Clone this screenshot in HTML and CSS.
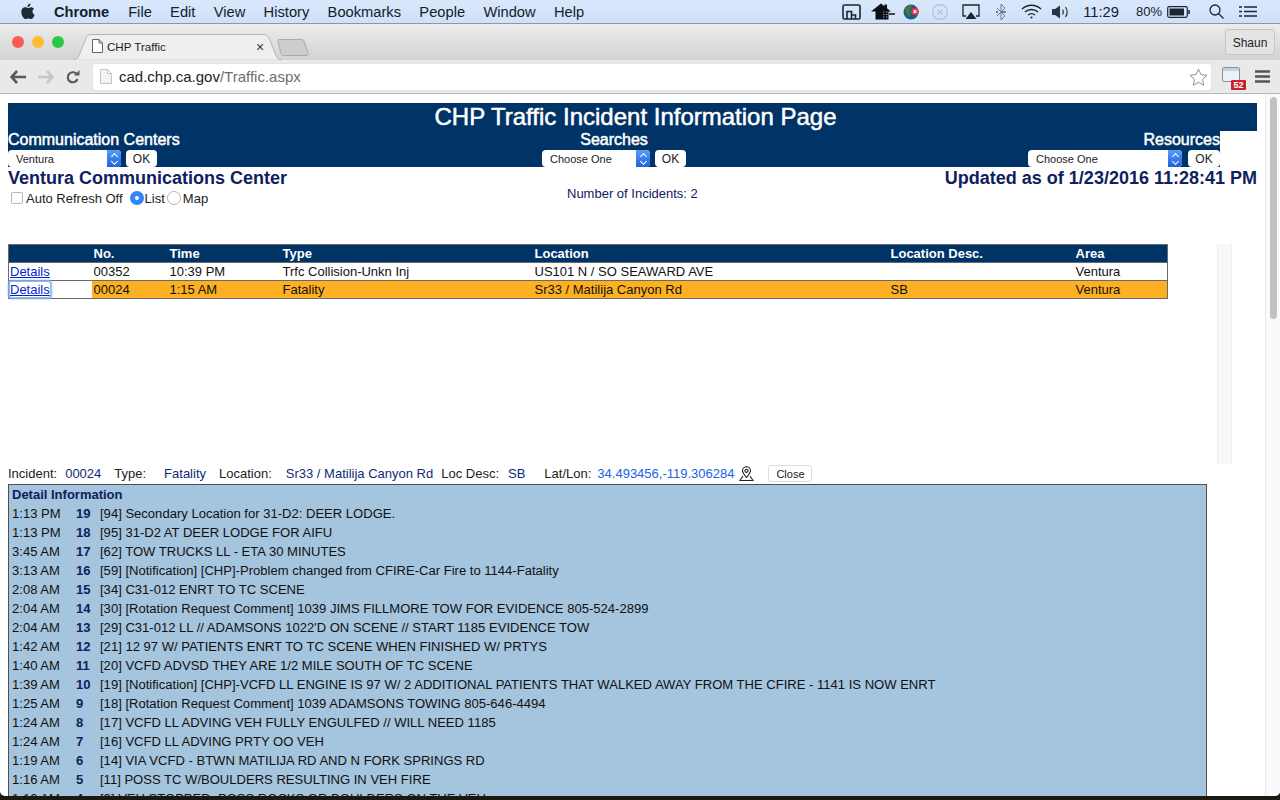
FILE: index.html
```html
<!DOCTYPE html>
<html lang="en">
  <head>
    <meta charset="UTF-8" />
    <title>CHP Traffic</title>
    <link rel="stylesheet" href="styles.css">
  </head>
  <body>
    <div class="menubar">
      <svg class="apple" width="14" height="17" viewBox="0 0 14 17">
        <path d="M9.600 0.400c0.100 1.900-1.600 3.500-3.200 3.400-0.200-1.700 1.500-3.400 3.200-3.400zM10.100 4.200c1 0 2.200 0.500 3 1.600-2.400 1.500-2 4.800 0.600 5.900-0.700 1.900-2.200 4.400-3.700 4.400-1 0-1.500-0.600-2.700-0.600s-1.800 0.600-2.700 0.600c-1.800 0-4.300-3.900-4.300-7.200 0-3 1.900-4.600 3.800-4.600 1.200 0 2.200 0.700 3 0.700 0.700 0 1.800-0.800 3-0.800z" fill="#1d2b36" />
      </svg>
      <b class="menu-app">Chrome</b>
      <span class="menu-item">File</span>
      <span class="menu-item">Edit</span>
      <span class="menu-item">View</span>
      <span class="menu-item">History</span>
      <span class="menu-item">Bookmarks</span>
      <span class="menu-item">People</span>
      <span class="menu-item">Window</span>
      <span class="menu-item">Help</span>
      <div class="menu-status">
        <svg class="st-screen" width="19" height="17" viewBox="0 0 19 17" fill="none" stroke="#1b2630" stroke-width="1.600">
          <rect x="1" y="2" width="17" height="14" rx="1.500" />
          <path d="M5 16v-7.500h4.500v7.500M9.500 12h4v4" />
        </svg>
        <svg class="st-home" width="24" height="17" viewBox="0 0 24 17">
          <path d="M0 8.500l10-8 3.500 2.800v-1.800h2.500v3.800l4 3.200h-2.500v8h-13v-8z" fill="#0b0f14" />
          <path d="M18 11h6" stroke="#0b0f14" stroke-width="1.500" />
          <path d="M12 9h1.500M15 9h1.500M12 11.500h1.500M15 11.500h1.500M12 14h1.500M15 14h1.500" stroke="#8a97a6" stroke-width="1" />
        </svg>
        <svg class="st-globe" width="16" height="16" viewBox="0 0 16 16">
          <circle cx="8" cy="8" r="7.500" fill="#1f5a86" />
          <path d="M2 4.500c2-3 5-4 7-3 0 2-2 3-2 5s1 4 0 6c-2 0-5-3-5-8z" fill="#3d7a3c" />
          <circle cx="12" cy="7.500" r="3.800" fill="#d8394a" />
          <path d="M10.600 6.100l2.800 2.800M13.400 6.100l-2.800 2.800" stroke="#fff" stroke-width="1.200" />
        </svg>
        <svg class="st-skype" width="16" height="16" viewBox="0 0 16 16" fill="none" stroke="#b8c4d4" stroke-width="1.300">
          <rect x="1" y="1" width="14" height="14" rx="5" />
          <path d="M5.500 5.500l5 5M10.500 5.500l-5 5" />
        </svg>
        <svg class="st-airplay" width="18" height="16" viewBox="0 0 18 16">
          <path d="M4 12H1V1h16v11h-3" fill="none" stroke="#1b2630" stroke-width="1.300" />
          <path d="M9 8l5.500 7h-11z" fill="#1b2630" />
        </svg>
        <svg class="st-bt" width="10" height="18" viewBox="0 0 10 18" fill="none" stroke="#6d7a88" stroke-width="1">
          <path d="M1 5l8 8-4 4V1l4 4-8 8" />
          <circle cx="1" cy="9" r="0.700" fill="#1b2630" />
          <circle cx="9" cy="9" r="0.700" fill="#1b2630" />
          <circle cx="7" cy="9" r="0.700" fill="#1b2630" />
        </svg>
        <svg class="st-wifi" width="21" height="15" viewBox="0 0 21 15" fill="none" stroke="#1b2630" stroke-width="1.400">
          <path d="M1 5c5.500-5 13.500-5 19 0M4 8c3.800-3.300 9.200-3.300 13 0M7 11c2-1.600 5-1.600 7 0" />
          <circle cx="10.500" cy="13.500" r="1" fill="#1b2630" stroke="none" />
        </svg>
        <svg class="st-vol" width="17" height="14" viewBox="0 0 17 14">
          <path d="M0 4h3l5-3.500v13L3 10H0z" fill="#2a3540" />
          <path d="M10.500 4.500c1 1.500 1 3.500 0 5M13.500 2c2 3 2 7 0 10" fill="none" stroke="#2a3540" stroke-width="1.200" />
        </svg>
        <span class="st-clock">11:29</span>
        <span class="st-pct">80%</span>
        <svg class="st-batt" width="23" height="12" viewBox="0 0 23 12">
          <rect x="0.700" y="0.700" width="19.600" height="10.600" rx="1.500" fill="none" stroke="#1b2630" stroke-width="1.200" />
          <rect x="2.500" y="2.500" width="14.500" height="7" fill="#1b2630" />
          <rect x="21.300" y="4" width="1.500" height="4" fill="#1b2630" />
        </svg>
        <svg class="st-search" width="15" height="15" viewBox="0 0 15 15" fill="none" stroke="#1b2630" stroke-width="1.300">
          <circle cx="6" cy="6" r="5" />
          <path d="M9.500 9.500l5 5" />
        </svg>
        <svg class="st-list" width="18" height="11" viewBox="0 0 18 11" fill="none" stroke="#1b2630" stroke-width="1.500">
          <path d="M0 1h3M5 1h13M0 5.500h3M5 5.500h13M0 10h3M5 10h13" />
        </svg>
      </div>
    </div>

    <div class="window">
      <div class="tabstrip">
        <div class="lights">
          <i class="light red"></i>
          <i class="light yellow"></i>
          <i class="light green"></i>
        </div>
        <div class="tab">
          <svg class="tab-shape" width="209" height="26" viewBox="0 0 209 26">
            <path d="M0 25.500c3 0 5-1 6-4L13 4c1-2.500 2.500-3.500 5-3.500h173c2.500 0 4 1 5 3.500l7 17.500c1 3 3 4 6 4" fill="#efefef" stroke="#b4b4b4" />
          </svg>
          <svg class="page-icon" width="11" height="14" viewBox="0 0 11 14" fill="#fff" stroke="#666">
            <path d="M0.500 0.500h6.500l3.500 3.500v9.500h-10zM7 0.500v3.500h3.500" />
          </svg>
          <span class="tab-title">CHP Traffic</span>
          <span class="tab-close">×</span>
        </div>
        <svg class="new-tab" width="32" height="17" viewBox="0 0 33 18" preserveAspectRatio="none">
          <path d="M1 1.500c0-0.600 0.400-1 1-1h23c1.500 0 2.500 0.800 3 2l4 12c0.400 1.500-0.500 3-2 3H7c-1.500 0-2.500-0.800-3-2z" fill="#cdcdcd" stroke="#a8a8a8" />
        </svg>
        <div class="profile">Shaun</div>
      </div>
      <div class="toolbar">
        <svg class="nav-icon" width="16" height="14" viewBox="0 0 16 14">
          <path d="M7 1L1.500 7 7 13M2 7h14" fill="none" stroke="#5a5a5a" stroke-width="2.600" />
        </svg>
        <svg class="nav-icon" width="16" height="14" viewBox="0 0 16 14">
          <path d="M9 1l5.500 6L9 13M14 7H0" fill="none" stroke="#c6c6c6" stroke-width="2.600" />
        </svg>
        <svg class="nav-icon" width="14" height="14" viewBox="0 0 14 14">
          <path d="M11.500 9a5 5 0 1 1-0.500-4.500" fill="none" stroke="#5a5a5a" stroke-width="2.200" />
          <path d="M8 5.500h5.500V0z" fill="#5a5a5a" />
        </svg>
        <div class="omnibox">
          <svg class="page-icon-light" width="12" height="15" viewBox="0 0 12 15" fill="#f4f4f4" stroke="#c4c4c4">
            <path d="M0.500 0.500h7l4 4v10h-11zM7.500 0.500v4h4" />
          </svg>
          <span class="url">cad.chp.ca.gov<span class="url-path">/Traffic.aspx</span></span>
          <svg class="star" width="19" height="18" viewBox="0 0 19 18">
            <path d="M9.500 1l2.500 5.600 6 0.700-4.500 4 1.300 6-5.300-3-5.300 3 1.300-6-4.500-4 6-0.700z" fill="#fff" stroke="#8f8f8f" />
          </svg>
        </div>
        <div class="ext-icon">
          <svg width="18" height="15" viewBox="0 0 18 15">
            <rect x="0.500" y="0.500" width="17" height="14" rx="1.500" fill="#eef2f6" stroke="#8b8f94" />
            <rect x="1" y="1" width="16" height="3" fill="#bcd3e8" />
          </svg>
          <span class="ext-badge">52</span>
        </div>
        <svg class="hamburger" width="15" height="13" viewBox="0 0 15 13">
          <path d="M0 1.500h15M0 6.500h15M0 11.500h15" stroke="#555" stroke-width="2.300" />
        </svg>
      </div>

      <div class="viewport">
        <div class="page">
          <h1 class="page-title">CHP Traffic Incident Information Page</h1>
          <div class="controls">
            <div class="control control-left">
              <div class="control-label">Communication Centers</div>
              <div class="control-row">
                <span class="select select-left">Ventura<i class="select-arrow"></i></span>
                <span class="ok-btn">OK</span>
              </div>
            </div>
            <div class="control control-center">
              <div class="control-label">Searches</div>
              <div class="control-row">
                <span class="select select-mid">Choose One<i class="select-arrow"></i></span>
                <span class="ok-btn">OK</span>
              </div>
            </div>
            <div class="control control-right">
              <div class="control-label">Resources</div>
              <div class="control-row">
                <span class="select select-right">Choose One<i class="select-arrow"></i></span>
                <span class="ok-btn">OK</span>
              </div>
            </div>
          </div>

          <div class="status">
            <div class="status-left">
              <h2 class="center-name">Ventura Communications Center</h2>
              <div class="view-opts">
                <i class="checkbox"></i><span class="opt-refresh">Auto Refresh Off</span>
                <i class="radio radio-on"></i><span class="opt-list">List</span>
                <i class="radio"></i><span class="opt-map">Map</span>
              </div>
            </div>
            <div class="incident-count">Number of Incidents: 2</div>
            <h2 class="updated">Updated as of 1/23/2016 11:28:41 PM</h2>
          </div>

          <div class="incident-area">
            <table class="incidents">
              <colgroup>
                <col class="col-link" />
                <col class="col-no" />
                <col class="col-time" />
                <col class="col-type" />
                <col class="col-loc" />
                <col class="col-desc" />
                <col />
              </colgroup>
              <thead>
                <tr>
                  <th></th>
                  <th>No.</th>
                  <th>Time</th>
                  <th>Type</th>
                  <th>Location</th>
                  <th>Location Desc.</th>
                  <th>Area</th>
                </tr>
              </thead>
              <tbody>
                <tr>
                  <td class="link-cell"><a href="#">Details</a></td>
                  <td>00352</td>
                  <td>10:39 PM</td>
                  <td>Trfc Collision-Unkn Inj</td>
                  <td>US101 N / SO SEAWARD AVE</td>
                  <td></td>
                  <td>Ventura</td>
                </tr>
                <tr class="selected">
                  <td class="link-cell"><a href="#" class="focused">Details</a></td>
                  <td>00024</td>
                  <td>1:15 AM</td>
                  <td>Fatality</td>
                  <td>Sr33 / Matilija Canyon Rd</td>
                  <td>SB</td>
                  <td>Ventura</td>
                </tr>
              </tbody>
            </table>
            <div class="inner-track"></div>
          </div>

          <div class="incident-line">
            <span>Incident:</span><span class="val val-no">00024</span>
            <span class="lbl-type">Type:</span><span class="val val-type">Fatality</span>
            <span class="lbl-loc">Location:</span><span class="val val-loc">Sr33 / Matilija Canyon Rd</span>
            <span class="lbl-desc">Loc Desc:</span><span class="val val-desc">SB</span>
            <span class="lbl-lat">Lat/Lon:</span><a class="latlon" href="#">34.493456,-119.306284</a>
            <svg class="pin" width="15" height="15" viewBox="0 0 15 15" fill="none" stroke="#222" stroke-width="1.100">
              <path d="M7.500 11.500C5 8.500 3.500 6.800 3.500 4.800a4 4 0 0 1 8 0c0 2-1.500 3.700-4 6.700z" />
              <circle cx="7.500" cy="4.800" r="1.600" />
              <path d="M4 10l-3 4.500h13L11 10" />
            </svg>
            <span class="close-btn">Close</span>
          </div>

          <div class="detail">
            <div class="detail-title">Detail Information</div>
            <div class="detail-row"><span>1:13 PM</span><b>19</b><span>[94] Secondary Location for 31-D2: DEER LODGE.</span></div>
            <div class="detail-row"><span>1:13 PM</span><b>18</b><span>[95] 31-D2 AT DEER LODGE FOR AIFU</span></div>
            <div class="detail-row"><span>3:45 AM</span><b>17</b><span>[62] TOW TRUCKS LL - ETA 30 MINUTES</span></div>
            <div class="detail-row"><span>3:13 AM</span><b>16</b><span>[59] [Notification] [CHP]-Problem changed from CFIRE-Car Fire to 1144-Fatality</span></div>
            <div class="detail-row"><span>2:08 AM</span><b>15</b><span>[34] C31-012 ENRT TO TC SCENE</span></div>
            <div class="detail-row"><span>2:04 AM</span><b>14</b><span>[30] [Rotation Request Comment] 1039 JIMS FILLMORE TOW FOR EVIDENCE 805-524-2899</span></div>
            <div class="detail-row"><span>2:04 AM</span><b>13</b><span>[29] C31-012 LL // ADAMSONS 1022'D ON SCENE // START 1185 EVIDENCE TOW</span></div>
            <div class="detail-row"><span>1:42 AM</span><b>12</b><span>[21] 12 97 W/ PATIENTS ENRT TO TC SCENE WHEN FINISHED W/ PRTYS</span></div>
            <div class="detail-row"><span>1:40 AM</span><b>11</b><span>[20] VCFD ADVSD THEY ARE 1/2 MILE SOUTH OF TC SCENE</span></div>
            <div class="detail-row"><span>1:39 AM</span><b>10</b><span>[19] [Notification] [CHP]-VCFD LL ENGINE IS 97 W/ 2 ADDITIONAL PATIENTS THAT WALKED AWAY FROM THE CFIRE - 1141 IS NOW ENRT</span></div>
            <div class="detail-row"><span>1:25 AM</span><b>9</b><span>[18] [Rotation Request Comment] 1039 ADAMSONS TOWING 805-646-4494</span></div>
            <div class="detail-row"><span>1:24 AM</span><b>8</b><span>[17] VCFD LL ADVING VEH FULLY ENGULFED // WILL NEED 1185</span></div>
            <div class="detail-row"><span>1:24 AM</span><b>7</b><span>[16] VCFD LL ADVING PRTY OO VEH</span></div>
            <div class="detail-row"><span>1:19 AM</span><b>6</b><span>[14] VIA VCFD - BTWN MATILIJA RD AND N FORK SPRINGS RD</span></div>
            <div class="detail-row"><span>1:16 AM</span><b>5</b><span>[11] POSS TC W/BOULDERS RESULTING IN VEH FIRE</span></div>
            <div class="detail-row"><span>1:10 AM</span><b>4</b><span>[9] VEH STOPPED, POSS ROCKS OR BOULDERS ON THE VEH</span></div>
          </div>
        </div>
        <div class="scrollbar"><div class="scroll-thumb"></div></div>
      </div>
    </div>
  </body>
</html>
```

FILE: styles.css
```css
* {
  box-sizing: border-box;
}
html,
body {
  margin: 0;
  height: 800px;
  overflow: hidden;
}
body {
  display: flex;
  flex-direction: column;
  background: #1b1a12;
  font-family: "Liberation Sans", Arial, sans-serif;
  color: #111;
}

/* mac menu bar */
.menubar {
  display: flex;
  align-items: center;
  height: 23px;
  padding-left: 21px;
  background: linear-gradient(#d9e8fc, #cfe0f8);
  font-size: 14.700px;
  color: #16202a;
}
.apple {
  margin-right: 19px;
}
.menu-app {
  margin-right: 19px;
  font-size: 14.600px;
  font-weight: 700;
}
.menu-item {
  margin-right: 18.300px;
}
.menu-status {
  display: flex;
  align-items: center;
  margin-left: auto;
  padding-right: 23px;
  font-size: 13px;
}
.menu-status svg,
.menu-status span {
  flex: none;
}
.st-screen { margin-right: 10px; }
.st-home { margin-right: 8px; }
.st-globe { margin-right: 13px; }
.st-skype { margin-right: 14px; }
.st-airplay { margin-right: 16px; }
.st-bt { margin-right: 15px; }
.st-wifi { margin-right: 10px; }
.st-vol { margin-right: 14px; }
.st-clock { margin-right: 17px; font-size: 14.700px; }
.st-pct { margin-right: 5px; }
.st-batt { margin-right: 19px; }
.st-search { margin-right: 15px; }

/* browser frame */
.window {
  display: flex;
  flex-direction: column;
  height: 773px;
  border-radius: 0 0 5px 5px;
  overflow: hidden;
  background: #fff;
}
.tabstrip {
  display: flex;
  align-items: flex-end;
  flex: none;
  height: 37px;
  border-top: 1px solid #8a97a8;
  background: linear-gradient(#ececec, #d3d3d3);
}
.lights {
  display: flex;
  gap: 8px;
  align-self: flex-start;
  margin: 12px 0 0 12px;
}
.light {
  width: 12px;
  height: 12px;
  border-radius: 50%;
}
.red { background: #fb5b55; }
.yellow { background: #fdbb33; }
.green { background: #2ac840; }
.tab {
  position: relative;
  display: flex;
  align-items: center;
  flex: none;
  width: 209px;
  height: 26px;
  margin-left: 9px;
  padding: 0 0 2px 19px;
  font-size: 11.600px;
  color: #222;
}
.tab-shape {
  position: absolute;
  top: 0;
  left: 0;
}
.page-icon {
  position: relative;
  margin-right: 4px;
}
.tab-title {
  position: relative;
}
.tab-close {
  position: absolute;
  left: 183px;
  top: 6px;
  font-size: 14px;
  line-height: 15px;
  color: #333;
}
.new-tab {
  margin: 0 0 4px -5px;
}
.profile {
  align-self: flex-start;
  width: 50px;
  height: 26px;
  margin: 5px 5px 0 auto;
  border: 1px solid #c6c6c6;
  border-radius: 3px;
  background: #e4e4e4;
  font-size: 12px;
  line-height: 27px;
  text-align: center;
  color: #222;
}
.toolbar {
  display: flex;
  align-items: center;
  flex: none;
  height: 34px;
  padding-left: 10px;
  border-bottom: 1px solid #b8b8b8;
  background: #e9e9e9;
}
.nav-icon {
  margin-right: 12px;
}
.omnibox {
  display: flex;
  align-items: center;
  width: 1118px;
  height: 26px;
  margin-left: 1px;
  padding: 0 3px 0 7px;
  border-radius: 2px;
  background: #fff;
  box-shadow: 0 0 1px #aaa;
  font-size: 15px;
}
.page-icon-light {
  margin-right: 7px;
}
.url {
  color: #222;
}
.url-path {
  color: #6e6e6e;
}
.star {
  margin-left: auto;
}
.ext-icon {
  position: relative;
  width: 24px;
  height: 22px;
  margin-left: 11px;
  padding-top: 1px;
}
.ext-icon svg {
  display: block;
}
.ext-badge {
  position: absolute;
  right: 0;
  bottom: -2px;
  width: 15px;
  height: 10px;
  border-radius: 1px;
  background: #c8202c;
  font-size: 9px;
  font-weight: 700;
  line-height: 10px;
  text-align: center;
  color: #fff;
}
.hamburger {
  margin-left: 9px;
}

/* the traffic page */
.viewport {
  display: flex;
  flex: 1;
  min-height: 0;
}
.page {
  flex: 1;
  min-width: 0;
  padding: 9px 8px 0;
  overflow: hidden;
}
.scrollbar {
  flex: none;
  width: 15px;
  padding: 3px 3px 0 4px;
  border-left: 1px solid #e8e8e8;
  background: #fafafa;
}
.scroll-thumb {
  height: 222px;
  border-radius: 4px;
  background: #c2c2c2;
}
.page-title {
  margin: 0;
  width: 1249px;
  height: 28px;
  padding-left: 6px;
  background: #003366;
  font-size: 24px;
  font-weight: 400;
  line-height: 28px;
  text-align: center;
  color: #fff;
  -webkit-text-stroke: 0.500px #fff;
}
.controls {
  display: grid;
  grid-template-columns: 1fr 1fr 1fr;
  width: 1212px;
  height: 36px;
  background: #003366;
}
.control-label {
  height: 19px;
  font-size: 16px;
  line-height: 18px;
  color: #fff;
  -webkit-text-stroke: 0.500px #fff;
}
.control-row {
  display: flex;
  gap: 5px;
  height: 17px;
}
.control-center {
  text-align: center;
}
.control-center .control-row {
  justify-content: center;
}
.control-right {
  text-align: right;
}
.control-right .control-row {
  justify-content: flex-end;
  gap: 6px;
}
.select {
  position: relative;
  flex: none;
  height: 17px;
  padding-left: 8px;
  border-radius: 4px;
  background: #fff;
  font-size: 11px;
  line-height: 18px;
  text-align: left;
  color: #222;
  overflow: hidden;
}
.select-left { width: 113px; }
.select-mid { width: 108px; }
.select-right { width: 154px; }
.select-arrow {
  position: absolute;
  top: 0;
  right: 0;
  width: 14px;
  height: 17px;
  background: linear-gradient(#5b9df5, #1c62e0);
}
.select-arrow::before,
.select-arrow::after {
  content: "";
  position: absolute;
  left: 5px;
  width: 4px;
  height: 4px;
  border-left: 1px solid #fff;
  border-top: 1px solid #fff;
}
.select-arrow::before {
  top: 4px;
  transform: rotate(45deg);
}
.select-arrow::after {
  top: 9px;
  transform: rotate(225deg);
}
.ok-btn {
  flex: none;
  width: 31px;
  height: 17px;
  border-radius: 4px;
  background: #fff;
  font-size: 12px;
  line-height: 18px;
  text-align: center;
  color: #222;
}
.control-right .ok-btn {
  width: 32px;
}
.status {
  display: flex;
  align-items: flex-start;
  height: 77px;
  padding-top: 1px;
}
.center-name,
.updated {
  margin: 0;
  font-size: 18px;
  font-weight: 700;
  line-height: 21px;
  white-space: nowrap;
  color: #0f2060;
}
.status-left {
  flex: none;
  width: 559px;
}
.view-opts {
  display: flex;
  align-items: center;
  height: 16px;
  margin: 1px 0 0 3px;
  font-size: 13px;
  color: #222;
}
.checkbox {
  width: 12px;
  height: 12px;
  margin-right: 3px;
  border: 1px solid #b5b5b5;
  border-radius: 2px;
  background: #fff;
}
.opt-refresh {
  margin-right: 7px;
}
.opt-list {
  margin: 0 2px 0 1px;
}
.opt-map {
  margin-left: 2px;
}
.radio {
  width: 14px;
  height: 14px;
  border: 1px solid #b5b5b5;
  border-radius: 50%;
  background: #fff;
}
.radio-on {
  border: 5px solid #2f86f6;
}
.incident-count {
  flex: none;
  margin-top: 18px;
  font-size: 13px;
  line-height: 15px;
  color: #0f2060;
}
.updated {
  margin-left: auto;
}
.incident-area {
  display: flex;
  height: 220px;
}
.incidents {
  table-layout: fixed;
  width: 1160px;
  height: 55px;
  border-collapse: collapse;
  border: 1px solid #6a6a6a;
  font-size: 13px;
  color: #111;
}
.col-link { width: 83px; }
.col-no { width: 76px; }
.col-time { width: 113px; }
.col-type { width: 252px; }
.col-loc { width: 356px; }
.col-desc { width: 185px; }
.incidents th,
.incidents td {
  padding: 0 0 0 2px;
  height: 18px;
  text-align: left;
  white-space: nowrap;
}
.incidents .link-cell {
  padding-left: 1px;
}
.incidents th {
  background: #003366;
  color: #fff;
  font-weight: 700;
}
.incidents tbody tr {
  border-top: 1px solid #6a6a6a;
}
.selected td {
  background: #fdb022;
}
.selected .link-cell {
  background: #fff;
}
.incidents a {
  color: #0a1fd0;
}
.focused {
  border-radius: 2px;
  box-shadow: 0 0 2px 2px #8ab8ec;
}
.inner-track {
  width: 15px;
  height: 220px;
  margin-left: 49px;
  border-left: 1px solid #eee;
  border-right: 1px solid #eee;
  background: #f8f8f8;
}
.incident-line {
  display: flex;
  align-items: center;
  height: 18px;
  margin-bottom: 2px;
  font-size: 13px;
  color: #222;
}
.val {
  color: #0f2a7a;
}
.val-no { margin-left: 8px; }
.lbl-type { margin-left: 13px; }
.val-type { margin-left: 18px; }
.lbl-loc { margin-left: 13px; }
.val-loc { margin-left: 14px; }
.lbl-desc { margin-left: 8px; }
.val-desc { margin-left: 9px; }
.lbl-lat { margin-left: 19px; }
.latlon {
  margin-left: 6px;
  color: #1a62e8;
  text-decoration: none;
}
.pin {
  margin-left: 5px;
}
.close-btn {
  width: 44px;
  height: 17px;
  margin-left: 14px;
  border: 1px solid #dcdcdc;
  border-radius: 3px;
  background: #fff;
  font-size: 11px;
  line-height: 16px;
  text-align: center;
}
.detail {
  width: 1199px;
  margin-bottom: -200px;
  padding: 0 2px;
  border: 1px solid #4a5058;
  background: #a5c4de;
  font-size: 13.050px;
  color: #111;
}
.detail-title {
  height: 19px;
  padding-left: 1px;
  font-size: 13px;
  font-weight: 700;
  line-height: 20px;
  color: #0f2060;
}
.detail-row {
  display: grid;
  grid-template-columns: 64px 24px 1fr;
  height: 19px;
  padding-left: 1px;
  line-height: 19px;
}
.detail-row b {
  color: #0f2060;
}
```
